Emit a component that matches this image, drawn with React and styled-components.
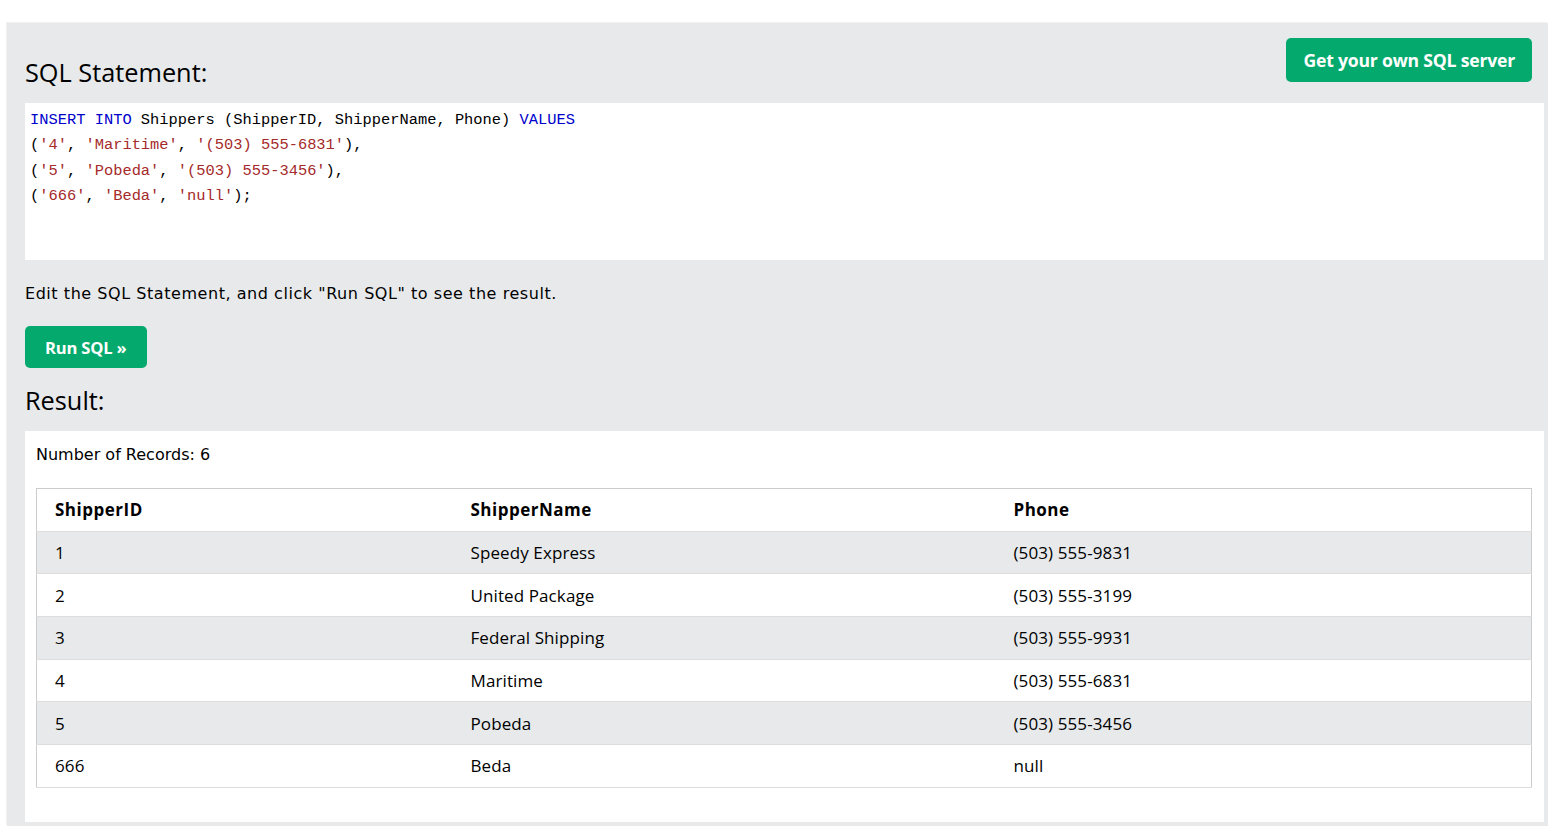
import React from "react";
import styled, { createGlobalStyle } from "styled-components";

const Global = createGlobalStyle`
  html, body { margin: 0; padding: 0; background: #ffffff; }
  body { font-family: "Open Sans", sans-serif; color: #000; }
`;

const Panel = styled.div`
  margin: 23px 0 0 7px;
  background: #e7e9eb;
  padding: 15px 4px 4px 18px;
  box-shadow: -1px -1px 0 #f0f1f2;
`;

const TopBar = styled.div`
  display: flex;
  justify-content: space-between;
  align-items: flex-start;
`;

const Heading = styled.h2`
  margin: 0;
  font-family: "Open Sans", sans-serif;
  font-weight: 400;
  font-size: 25.3px;
  line-height: 34px;
  padding-top: ${(p) => p.$top || 0}px;
  padding-bottom: ${(p) => p.$bottom || 0}px;
`;

const GreenButton = styled.button`
  background: #04aa6d;
  color: #fff;
  border: none;
  border-radius: 5px;
  font-family: "Open Sans", sans-serif;
  font-weight: 700;
  font-size: ${(p) => p.$size || 16}px;
  height: ${(p) => p.$h}px;
  padding: 0 ${(p) => p.$px}px;
  margin-right: ${(p) => p.$mr || 0}px;
  cursor: pointer;
  letter-spacing: -0.2px;
`;

const CodeBox = styled.div`
  background: #fff;
  height: 157px;
  box-sizing: border-box;
  padding: 5px 5px;
  font-family: "Liberation Mono", monospace;
  font-size: 15.4px;
  line-height: 25.4px;
  white-space: pre;
`;

const Kw = styled.span`
  color: #0000cd;
`;
const Str = styled.span`
  color: #a52a2a;
`;

const Hint = styled.p`
  margin: 0;
  padding: 22px 0 20px;
  font-family: "DejaVu Sans", Verdana, sans-serif;
  font-size: 16px;
  line-height: 24px;
  letter-spacing: 0.55px;
`;

const ResultBox = styled.div`
  background: #fff;
  padding: 12px 12px 34px 11px;
  margin-top: 14px;
`;

const Count = styled.div`
  font-family: "DejaVu Sans", Verdana, sans-serif;
  font-size: 16px;
  line-height: 24px;
  margin-bottom: 21px;
`;

const Table = styled.table`
  width: 100%;
  border-collapse: collapse;
  border: 1px solid #ccc;
  font-family: "Open Sans", sans-serif;
  font-size: 17px;
`;

const Row = styled.tr`
  background: ${(p) => (p.$striped ? "#e7e9eb" : "#fff")};
  border-bottom: 1px solid #ddd;
  height: 42.7px;
`;

const Cell = styled.td`
  padding: 0 8px;
  vertical-align: middle;
  text-align: left;
  font-weight: ${(p) => (p.$head ? 700 : 400)};
  letter-spacing: ${(p) => (p.$head ? "0.5px" : "0.1px")};
  &:first-child { padding-left: 18px; }
`;

const rows = [
  ["1", "Speedy Express", "(503) 555-9831"],
  ["2", "United Package", "(503) 555-3199"],
  ["3", "Federal Shipping", "(503) 555-9931"],
  ["4", "Maritime", "(503) 555-6831"],
  ["5", "Pobeda", "(503) 555-3456"],
  ["666", "Beda", "null"],
];

export default function App() {
  return (
    <>
      <Global />
      <Panel>
        <TopBar>
          <Heading $top={17} $bottom={14}>SQL Statement:</Heading>
          <GreenButton $size={17.6} $h={44} $px={17} $mr={12}>
            Get your own SQL server
          </GreenButton>
        </TopBar>
        <CodeBox>
          <Kw>INSERT</Kw> <Kw>INTO</Kw> Shippers (ShipperID, ShipperName, Phone) <Kw>VALUES</Kw>
          {"\n"}(<Str>'4'</Str>, <Str>'Maritime'</Str>, <Str>'(503) 555-6831'</Str>),
          {"\n"}(<Str>'5'</Str>, <Str>'Pobeda'</Str>, <Str>'(503) 555-3456'</Str>),
          {"\n"}(<Str>'666'</Str>, <Str>'Beda'</Str>, <Str>'null'</Str>);
        </CodeBox>
        <Hint>Edit the SQL Statement, and click "Run SQL" to see the result.</Hint>
        <GreenButton $size={16.6} $h={42} $px={20}>Run SQL »</GreenButton>
        <Heading $top={15}>Result:</Heading>
        <ResultBox>
          <Count>Number of Records: 6</Count>
          <Table>
            <colgroup>
              <col style={{ width: "426px" }} />
              <col style={{ width: "543px" }} />
              <col />
            </colgroup>
            <tbody>
              <Row>
                <Cell $head>ShipperID</Cell>
                <Cell $head>ShipperName</Cell>
                <Cell $head>Phone</Cell>
              </Row>
              {rows.map((r, i) => (
                <Row key={i} $striped={i % 2 === 0}>
                  {r.map((c, j) => (
                    <Cell key={j}>{c}</Cell>
                  ))}
                </Row>
              ))}
            </tbody>
          </Table>
        </ResultBox>
      </Panel>
    </>
  );
}
